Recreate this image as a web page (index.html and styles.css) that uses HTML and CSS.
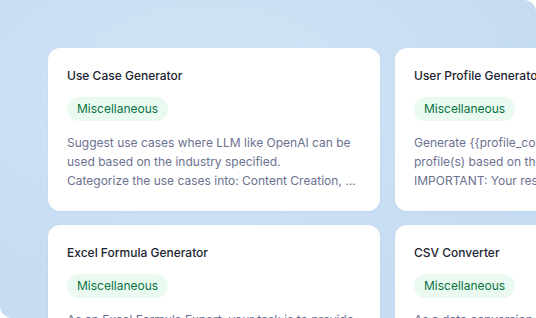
FILE: index.html
```html
<!DOCTYPE html>
<html>
<head>
<meta charset="utf-8">
<title>Templates</title>
<link rel="stylesheet" href="styles.css">
</head>
<body>
<div class="panel">
  <div class="grid">
    <div class="card">
      <div class="title">Use Case Generator</div>
      <span class="badge">Miscellaneous</span>
      <div class="desc">
        <div>Suggest use cases where LLM like OpenAI can be</div>
        <div>used based on the industry specified.</div>
        <div>Categorize the use cases into: Content Creation, ...</div>
      </div>
    </div>
    <div class="card">
      <div class="title">User Profile Generator</div>
      <span class="badge">Miscellaneous</span>
      <div class="desc">
        <div>Generate {{profile_count}} realistic user</div>
        <div>profile(s) based on the given information.</div>
        <div>IMPORTANT: Your response must be valid JSON.</div>
      </div>
    </div>
    <div class="card">
      <div class="title">Excel Formula Generator</div>
      <span class="badge">Miscellaneous</span>
      <div class="desc">
        <div>As an Excel Formula Expert, your task is to provide</div>
        <div>advanced Excel formulas that perform the complex</div>
        <div>calculations or data manipulations described.</div>
      </div>
    </div>
    <div class="card">
      <div class="title">CSV Converter</div>
      <span class="badge">Miscellaneous</span>
      <div class="desc">
        <div>As a data conversion expert, your task is to</div>
        <div>convert data from different formats into CSV.</div>
        <div>Structure the data properly.</div>
      </div>
    </div>
  </div>
</div>
</body>
</html>
```

FILE: styles.css
```css
html, body {
  margin: 0;
  padding: 0;
  background: #fff;
}

body {
  font-family: Inter, "Noto Sans", sans-serif;
  width: 536px;
  height: 318px;
  overflow: hidden;
}

.panel {
  width: 536px;
  height: 318px;
  box-sizing: border-box;
  padding: 48px 0 0 48px;
  overflow: hidden;
  border-radius: 0 12px 0 12px;
  background:
    radial-gradient(ellipse 360px 220px at 210px 90px, #d3e5f7 0%, rgba(211,229,247,0) 100%),
    linear-gradient(180deg, #c4dbf2 0%, #c6dcf2 100%);
}

.grid {
  display: grid;
  grid-template-columns: 332px 332px;
  grid-auto-rows: 163px;
  column-gap: 15px;
  row-gap: 14px;
}

.card {
  background: #fff;
  border-radius: 12px;
  padding: 18px 19px 20px 19px;
  box-sizing: border-box;
  box-shadow: 0 1px 3px rgba(80, 120, 170, 0.08);
  overflow: hidden;
}

.title {
  font-size: 12px;
  line-height: 20px;
  font-weight: 500;
  color: #1d2433;
  white-space: nowrap;
}

.badge {
  display: inline-block;
  margin-top: 11px;
  height: 24px;
  line-height: 24px;
  padding: 0 10px;
  border-radius: 12px;
  background: #ebfaf1;
  color: #087443;
  font-size: 12px;
  font-weight: 400;
}

.desc {
  margin-top: 12px;
  font-size: 12px;
  line-height: 19px;
  color: #6b7190;
  white-space: nowrap;
}
```
